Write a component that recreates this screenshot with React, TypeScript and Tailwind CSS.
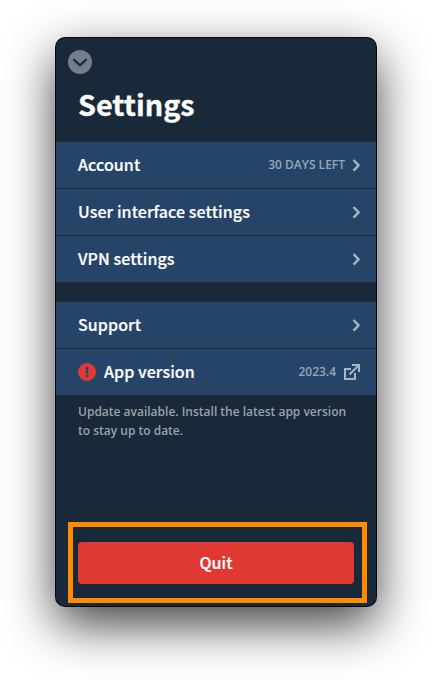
import type { ReactNode } from "react";

function Chevron() {
  return (
    <svg className="ml-[7px] h-[13px] w-2" viewBox="0 0 8 13" fill="none" stroke="#a8b4c3" strokeWidth="2.4">
      <path d="M1.5 1L6.6 6.3L1.5 11.6" strokeLinejoin="round" />
    </svg>
  );
}

function ExternalIcon() {
  return (
    <svg className="ml-2 h-4 w-4" viewBox="0 0 16 16" fill="none" stroke="#a8b4c3" strokeWidth="2">
      <path d="M7 5H1V15H11V9" />
      <path d="M8 1H15V8M15 1L5.5 10.5" />
    </svg>
  );
}

function Alert() {
  return (
    <svg className="mr-2 h-[18px] w-[18px]" viewBox="0 0 18 18">
      <circle cx="9" cy="9" r="9" fill="#e03934" />
      <rect x="7.8" y="3.8" width="2.4" height="7.2" rx="0.8" fill="#264468" />
      <rect x="7.8" y="12" width="2.4" height="2.2" rx="0.6" fill="#264468" />
    </svg>
  );
}

type RowProps = { label: string; detail?: string; icon?: ReactNode; end?: ReactNode };

function Row({ label, detail, icon, end = <Chevron /> }: RowProps) {
  return (
    <div className="flex h-[46px] items-center bg-[#264468] pr-4 pl-[22px]">
      {icon}
      <span className="flex-1 pb-0.5 font-['Noto_Sans_CJK_SC',sans-serif] text-[16px] leading-6 font-medium tracking-[0.08px] text-white [-webkit-text-stroke:0.2px_white]">
        {label}
      </span>
      {detail && <span className="text-[12px] leading-4 font-semibold text-[#98a6b7]">{detail}</span>}
      {end}
    </div>
  );
}

export default function App() {
  return (
    <div className="flex h-[680px] w-[432px] flex-col overflow-hidden bg-white pt-[38px] pl-14 font-['Open_Sans',sans-serif]">
      <div className="flex h-[568px] w-80 flex-col rounded-[9px] bg-[#19293a] shadow-[0_0_0_1px_#05090d,0_18px_50px_rgba(0,0,0,0.77)]">
        <div className="flex h-9 items-end pl-3">
          <svg className="h-6 w-6" viewBox="0 0 24 24">
            <circle cx="12" cy="12" r="12" fill="#757f89" />
            <path d="M6 9.8L12 15.4L18 9.8" fill="none" stroke="#19293a" strokeWidth="2.2" strokeLinecap="round" strokeLinejoin="round" />
          </svg>
        </div>
        <h1 className="h-[68px] pt-2.5 pl-[22px] font-['Noto_Sans_CJK_SC',sans-serif] text-[28.8px] leading-10 font-bold text-white [-webkit-text-stroke:0.3px_white]">
          Settings
        </h1>
        <div className="flex flex-col gap-px">
          <Row label="Account" detail="30 DAYS LEFT" />
          <Row label="User interface settings" />
          <Row label="VPN settings" />
        </div>
        <div className="mt-5 flex flex-col gap-px">
          <Row label="Support" />
          <Row label="App version" detail="2023.4" icon={<Alert />} end={<ExternalIcon />} />
        </div>
        <p className="px-[22px] pt-[7px] text-[12px] leading-[19px] font-semibold text-[#9ba2a9]">
          Update available. Install the latest app version to stay up to date.
        </p>
        <div className="mt-auto mb-[3px] ml-3 flex h-[81px] w-[299px] items-center border-5 border-[#ff8c00] pl-[5px]">
          <button className="h-[42px] w-[276px] rounded-[4px] bg-[#e03934] pb-0.5 font-['Noto_Sans_CJK_SC',sans-serif] text-[16px] font-medium tracking-[0.08px] text-white [-webkit-text-stroke:0.2px_white]">
            Quit
          </button>
        </div>
      </div>
    </div>
  );
}
